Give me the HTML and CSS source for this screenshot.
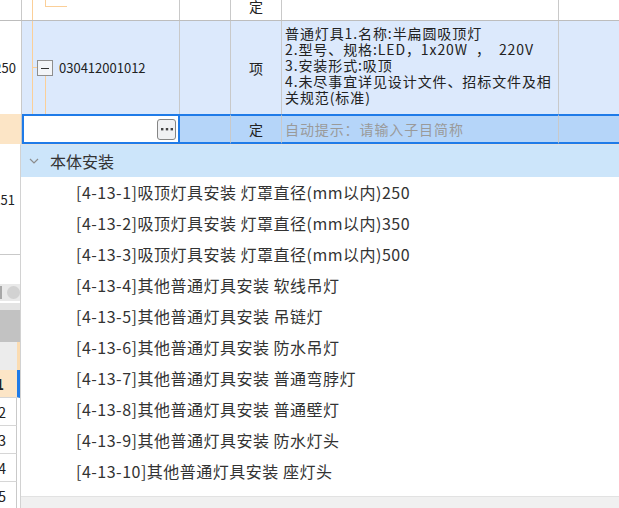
FILE: index.html
```html
<!DOCTYPE html>
<html lang="zh-CN">
<head>
    <meta charset="UTF-8">
    <title>清单编辑</title>
    <link rel="stylesheet" href="styles.css">
</head>
<body>

    <div class="sheet">
        <div class="row row-top">
            <div class="cell c-num"></div>
            <div class="cell c-code tree-top"></div>
            <div class="cell c-empty"></div>
            <div class="cell c-unit">定</div>
            <div class="cell c-desc"></div>
            <div class="cell c-rest"></div>
        </div>

        <div class="row row-item">
            <div class="cell c-num">250</div>
            <div class="cell c-code tree-item">
                <span class="tick"></span>
                <span class="toggle"></span>
                <span class="code">030412001012</span>
            </div>
            <div class="cell c-empty"></div>
            <div class="cell c-unit">项</div>
            <div class="cell c-desc">
                <p class="desc">普通灯具1.名称:半扁圆吸顶灯<br>2.型号、规格:LED，1x20W &nbsp;， &nbsp;220V<br>3.安装形式:吸顶<br>4.未尽事宜详见设计文件、招标文件及相<br>关规范(标准)</p>
            </div>
            <div class="cell c-rest"></div>
        </div>

        <div class="row row-edit">
            <div class="cell c-num"></div>
            <div class="cell c-code edit-box">
                <span class="more-btn">
                    <svg width="12" height="4" viewBox="0 0 12 4"><rect x="0" y="1" width="2.4" height="2.4" fill="#444"/><rect x="4.8" y="1" width="2.4" height="2.4" fill="#444"/><rect x="9.6" y="1" width="2.4" height="2.4" fill="#444"/></svg>
                </span>
            </div>
            <div class="cell c-empty"></div>
            <div class="cell c-unit">定</div>
            <div class="cell c-desc"><span class="hint">自动提示：请输入子目简称</span></div>
            <div class="cell c-rest"></div>
        </div>

        <!-- 左侧露出的行号 -->
        <div class="side">
            <div class="side-num big">251</div>
            <div class="side-blank"></div>
            <div class="side-scroll"><span class="scroll-end"></span><span class="scroll-pill"></span></div>
            <div class="side-gap"></div>
            <div class="side-head"></div>
            <div class="side-sub"></div>
            <div class="side-num small active">1</div>
            <div class="side-num small">2</div>
            <div class="side-num small">3</div>
            <div class="side-num small">4</div>
            <div class="side-num small">5</div>
        </div>
    </div>

    <div class="dropdown">
        <div class="group">
            <svg class="chevron" width="10" height="6" viewBox="0 0 10 6"><path d="M1 1 L5 5 L9 1" fill="none" stroke="#8c8c8c" stroke-width="1.2"/></svg>
            本体安装
        </div>
        <ul class="items">
            <li>[4-13-1]吸顶灯具安装 灯罩直径(mm以内)250</li>
            <li>[4-13-2]吸顶灯具安装 灯罩直径(mm以内)350</li>
            <li>[4-13-3]吸顶灯具安装 灯罩直径(mm以内)500</li>
            <li>[4-13-4]其他普通灯具安装 软线吊灯</li>
            <li>[4-13-5]其他普通灯具安装 吊链灯</li>
            <li>[4-13-6]其他普通灯具安装 防水吊灯</li>
            <li>[4-13-7]其他普通灯具安装 普通弯脖灯</li>
            <li>[4-13-8]其他普通灯具安装 普通壁灯</li>
            <li>[4-13-9]其他普通灯具安装 防水灯头</li>
            <li>[4-13-10]其他普通灯具安装 座灯头</li>
        </ul>
        <div class="dropdown-foot"></div>
    </div>

</body>
</html>
```

FILE: styles.css
```css
* {
    box-sizing: border-box;
}
body {
    margin: 0;
    width: 619px;
    height: 508px;
    overflow: hidden;
    position: relative;
    background-color: #fff;
    color: #222;
    font-family: "Noto Sans CJK SC", "Noto Sans", sans-serif;
}

/* 表格 */
.row {
    display: flex;
}
.cell {
    display: flex;
    align-items: center;
    overflow: hidden;
    white-space: nowrap;
    border-right: 1px solid #c9c9c9;
}
.c-num {
    width: 22px;
    justify-content: flex-end;
    padding-right: 5px;
    font-size: 13px;
    background-color: #fff;
}
.c-code {
    width: 158px;
    position: relative;
}
.c-empty {
    width: 51px;
}
.c-unit {
    width: 51px;
    justify-content: center;
    font-size: 14px;
}
.c-desc {
    width: 277px;
}
.c-rest {
    flex: 1;
    border-right: 0;
}

.row-top {
    height: 21px;
    border-bottom: 1px solid #bdbdbd;
}
.row-top .c-unit {
    align-items: flex-start;
    line-height: 13px;
}
.row-item {
    height: 93px;
    background-color: #dce9fc;
}
.row-edit {
    height: 30px;
}
.row-edit .c-num {
    background-color: #fce5c6;
}
.row-edit .cell:not(.c-num) {
    background-color: #b5d5f9;
    border-top: 2px solid #1f7be8;
    border-bottom: 2px solid #1f7be8;
}

/* 树形线 */
.tree-top::before,
.tree-item::before {
    content: "";
    position: absolute;
    left: 10px;
    top: 0;
    bottom: 0;
    border-left: 1px solid #fbcf98;
}
.tree-top::after {
    content: "";
    position: absolute;
    left: 23px;
    top: 0;
    width: 21px;
    height: 6px;
    border-left: 1px solid #fbcf98;
    border-bottom: 1px solid #fbcf98;
}
.tree-item {
    padding-left: 11px;
}
.tree-item::after {
    content: "";
    position: absolute;
    left: 23px;
    top: 55px;
    bottom: 0;
    border-left: 1px solid #fbcf98;
}
.tick {
    width: 4px;
    height: 1px;
    background-color: #fbcf98;
}
.toggle {
    width: 16px;
    height: 16px;
    border: 1px solid #8e8e8e;
    background-color: #f3f5f8;
    position: relative;
    margin-right: 6px;
}
.toggle::after {
    content: "";
    position: absolute;
    left: 3px;
    right: 3px;
    top: 7px;
    border-top: 1px solid #333;
}
.code {
    font-size: 13px;
    color: #222;
}

.desc {
    margin: 0;
    align-self: flex-start;
    padding: 4px 0 0 3px;
    font-size: 14px;
    letter-spacing: 0.9px;
    line-height: 16px;
    color: #222;
}

.edit-box {
    background-color: #fff !important;
    border: 2px solid #1f7be8;
    justify-content: flex-end;
    padding-right: 2px;
}
.more-btn {
    width: 19px;
    height: 21px;
    display: flex;
    align-items: center;
    justify-content: center;
    border: 1.5px solid #858585;
    border-radius: 3px;
    background-color: #f0f1f3;
}
.hint {
    padding-left: 3px;
    font-size: 14px;
    letter-spacing: 0.9px;
    color: #9a9a9a;
}

/* 左侧露出的行号 */
.side {
    width: 20px;
    display: flex;
    flex-direction: column;
}
.side-num {
    display: flex;
    align-items: center;
    justify-content: flex-end;
    overflow: hidden;
    white-space: nowrap;
    font-size: 13px;
}
.side-num.big {
    height: 111px;
    padding-right: 5px;
    border-bottom: 1px solid #c9c9c9;
}
.side-num.small {
    height: 28px;
    width: 17px;
    padding-right: 10px;
    border-right: 1px solid #c9c9c9;
    border-bottom: 1px solid #d6d6d6;
    font-size: 14px;
}
.side-num.active {
    background-color: #fce5c6;
    font-weight: bold;
    width: 20px;
    padding-right: 13px;
    border-right: 3px solid #1f7be8;
}
.side-blank {
    height: 29px;
}
.side-scroll {
    height: 17px;
    display: flex;
    align-items: center;
    background-color: #e9e9e9;
}
.scroll-end {
    width: 3px;
    height: 13px;
    background-color: #a8a8a8;
}
.scroll-pill {
    margin-left: 5px;
    width: 16px;
    height: 13px;
    border-radius: 7px;
    background-color: #d2d2d2;
}
.side-gap {
    height: 9px;
    border-top: 2px solid #fff;
    background-color: #e4e4e4;
}
.side-head {
    height: 32px;
    background-color: #c2c2c2;
}
.side-sub {
    height: 28px;
    background-color: #ececec;
    border-right: 3px solid #fbdcb2;
}

/* 下拉子目列表 */
.dropdown {
    position: absolute;
    left: 20px;
    top: 144px;
    right: 0;
    bottom: 0;
    display: flex;
    flex-direction: column;
    background-color: #fff;
    border-left: 1px solid #d2d2d2;
    border-top: 1px solid #e2e2e2;
}
.group {
    height: 32px;
    display: flex;
    align-items: center;
    padding-left: 8px;
    background-color: #cce5fa;
    font-size: 16px;
    color: #333;
}
.chevron {
    margin-right: 11px;
}
.items {
    list-style: none;
    margin: 0;
    padding: 0;
}
.items li {
    height: 31px;
    line-height: 31px;
    padding-left: 55px;
    font-size: 16px;
    letter-spacing: 0.5px;
    color: #333;
    white-space: nowrap;
}
.dropdown-foot {
    margin-top: auto;
    height: 12px;
    background-color: #f0f0f0;
    border-top: 1px solid #e2e2e2;
}
```
